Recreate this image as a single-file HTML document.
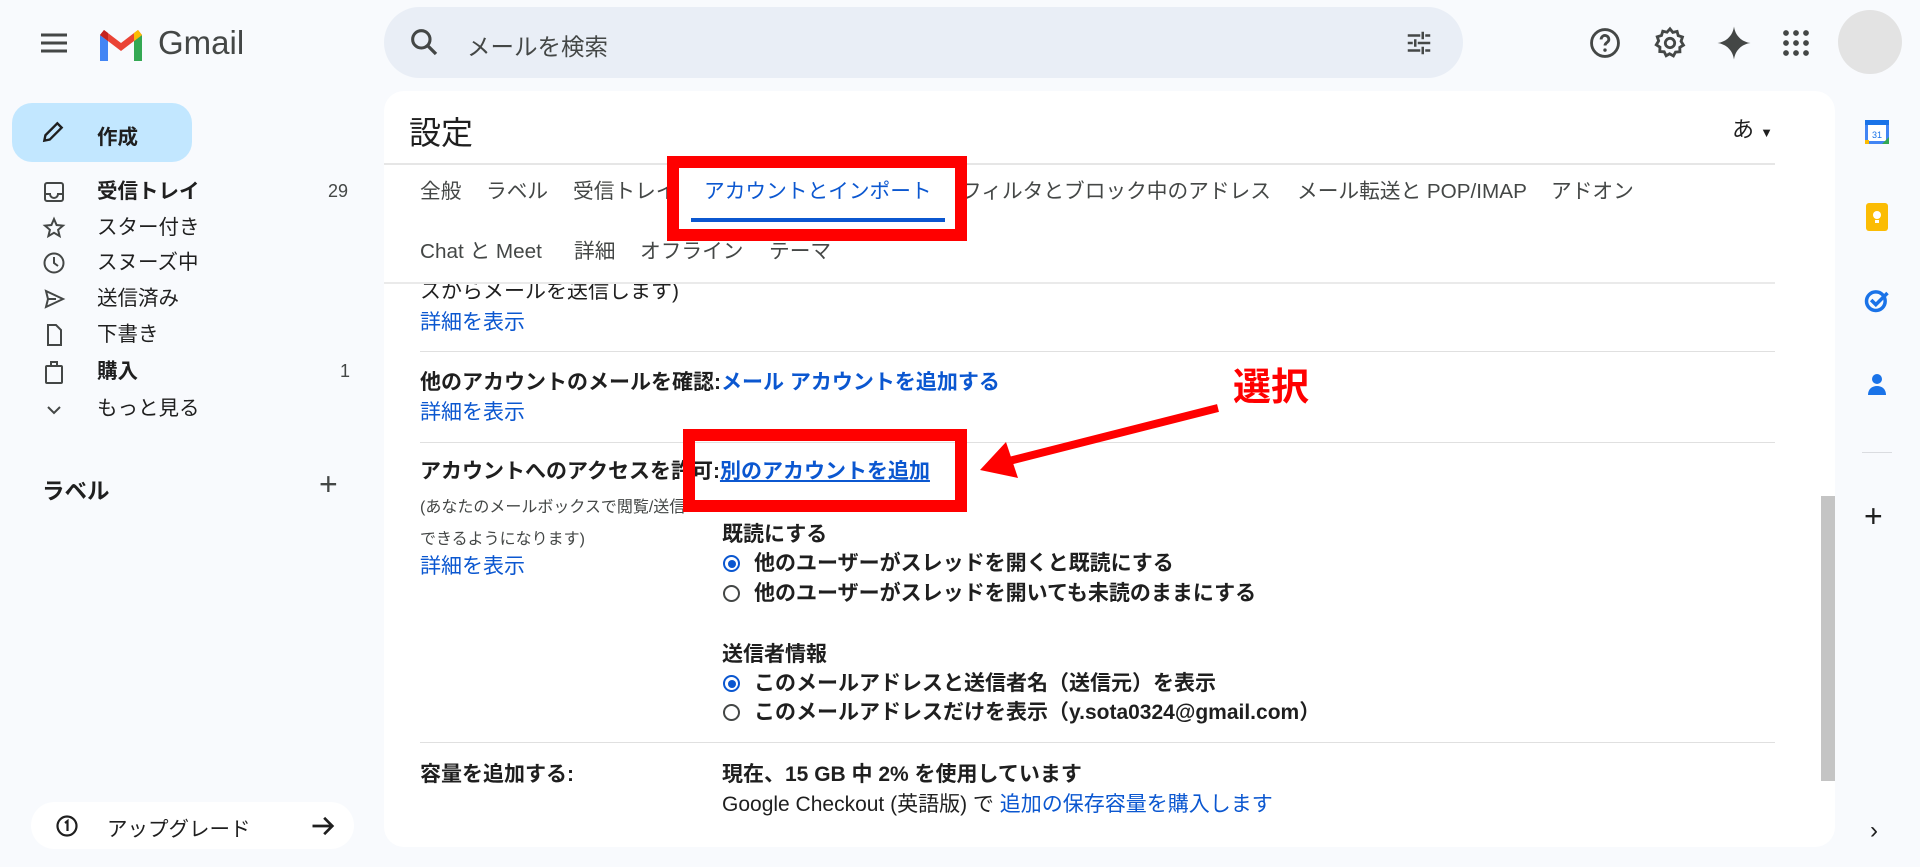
<!DOCTYPE html>
<html><head><meta charset="utf-8">
<style>
*{margin:0;padding:0;box-sizing:border-box}
body{width:1920px;height:867px;overflow:hidden;background:#f8fafd;font-family:"Liberation Sans","Noto Sans CJK JP",sans-serif;color:#1f1f1f;position:relative}
.a{position:absolute;white-space:nowrap}
.nav{font-size:20.5px;left:97px;line-height:24px}
.ic{position:absolute;left:42px}
.tab{font-size:20.7px;color:#444746;top:180px;line-height:24px}
.tab2{top:240px}
.t{font-size:21px;line-height:24px}
.b{font-weight:bold}
.lk{color:#0b57d0}
.hr{position:absolute;height:1px;background:#e0e0e0}
.rad{position:absolute;left:723px;width:17px;height:17px;border:2px solid #444746;border-radius:50%}
.rad.on{border-color:#0b57d0}
.rad.on::after{content:"";position:absolute;left:2.5px;top:2.5px;width:8px;height:8px;border-radius:50%;background:#0b57d0}
</style></head><body>

<svg class="a" style="left:38px;top:30px" width="32" height="26" viewBox="0 0 32 26"><path d="M3 5h26M3 13h26M3 21h26" stroke="#444746" stroke-width="3"/></svg>
<svg class="a" style="left:97px;top:27px" width="48" height="36" viewBox="0 0 48 36">
<path d="M3 34h8V14L3 8z" fill="#4285f4"/><path d="M37 34h8V8l-8 6z" fill="#34a853"/>
<path d="M3 8l21 16 21-16-4-5-17 13L7 3z" fill="#ea4335"/>
<path d="M37 14l8-6-4-5-4 3z" fill="#fbbc04"/><path d="M3 8l8 6V6L7 3z" fill="#c5221f"/></svg>
<div class="a" style="left:158px;top:24px;font-size:33px;color:#444746;line-height:38px">Gmail</div>

<div class="a" style="left:384px;top:7px;width:1079px;height:71px;border-radius:36px;background:#e9eef6"></div>
<svg class="a" style="left:408px;top:26px" width="32" height="32" viewBox="0 0 24 24"><circle cx="10" cy="10" r="6.5" fill="none" stroke="#444746" stroke-width="2.3"/><path d="M15 15l6 6" stroke="#444746" stroke-width="2.5"/></svg>
<div class="a" style="left:467px;top:28px;font-size:23.5px;color:#444746">メールを検索</div>
<svg class="a" style="left:1404px;top:28px" width="30" height="30" viewBox="0 0 24 24"><path d="M3 6h10M17 6h4M15 3v6M3 12h4M11 12h10M9 9v6M3 18h10M17 18h4M15 15v6" stroke="#444746" stroke-width="2"/></svg>

<svg class="a" style="left:1588px;top:26px" width="34" height="34" viewBox="0 0 24 24"><circle cx="12" cy="12" r="9.5" fill="none" stroke="#444746" stroke-width="2"/><path d="M9.3 9.5a2.7 2.7 0 115 1.3c-.8 1-2.3 1.4-2.3 3" fill="none" stroke="#444746" stroke-width="2"/><circle cx="12" cy="17" r="1.2" fill="#444746"/></svg>
<svg class="a" style="left:1653px;top:26px" width="34" height="34" viewBox="0 0 24 24"><path d="M12 2l2 2.5 3-.7.8 3 3 1-1 3 1.7 2.7-2.6 1.6.1 3.1-3.1.2-1.5 2.7-2.7-1.5L9.3 21l-1.4-2.8-3.1-.2.1-3.1L2.3 13.3 4 10.5 3 7.6l3-.9.9-3 3 .7z" fill="none" stroke="#444746" stroke-width="2"/><circle cx="12" cy="12" r="3.3" fill="none" stroke="#444746" stroke-width="2"/></svg>
<svg class="a" style="left:1716px;top:25px" width="36" height="36" viewBox="0 0 24 24"><path d="M12 1C12.8 7 17 11.2 23 12 17 12.8 12.8 17 12 23 11.2 17 7 12.8 1 12 7 11.2 11.2 7 12 1z" fill="#444746"/></svg>
<svg class="a" style="left:1781px;top:28px" width="30" height="30" viewBox="0 0 24 24" fill="#444746"><circle cx="4" cy="4" r="2.3"/><circle cx="12" cy="4" r="2.3"/><circle cx="20" cy="4" r="2.3"/><circle cx="4" cy="12" r="2.3"/><circle cx="12" cy="12" r="2.3"/><circle cx="20" cy="12" r="2.3"/><circle cx="4" cy="20" r="2.3"/><circle cx="12" cy="20" r="2.3"/><circle cx="20" cy="20" r="2.3"/></svg>
<div class="a" style="left:1838px;top:10px;width:64px;height:64px;border-radius:50%;background:#e3e3e3"></div>

<div class="a" style="left:12px;top:103px;width:180px;height:59px;border-radius:20px;background:#c2e7ff"></div>
<svg class="a" style="left:40px;top:119px" width="26" height="26" viewBox="0 0 24 24"><path d="M4 20l1-5L16 4l4 4L9 19z" fill="none" stroke="#1f1f1f" stroke-width="2.2"/></svg>
<div class="a" style="left:97px;top:120px;font-size:20.5px;font-weight:bold;color:#1f1f1f">作成</div>

<svg class="ic" style="top:180px" width="24" height="24" viewBox="0 0 24 24"><rect x="3" y="3" width="18" height="18" rx="2" fill="none" stroke="#444746" stroke-width="2"/><path d="M3 14h5a4 4 0 008 0h5" fill="none" stroke="#444746" stroke-width="2"/></svg>
<div class="a nav b" style="top:180px">受信トレイ</div><div class="a" style="left:328px;top:181px;font-size:18px;color:#444746">29</div>
<svg class="ic" style="top:216px" width="24" height="24" viewBox="0 0 24 24"><path d="M12 3l2.6 6 6.4.6-4.9 4.2 1.5 6.3L12 16.8 6.4 20.1l1.5-6.3L3 9.6 9.4 9z" fill="none" stroke="#444746" stroke-width="2"/></svg>
<div class="a nav" style="top:216px">スター付き</div>
<svg class="ic" style="top:251px" width="24" height="24" viewBox="0 0 24 24"><circle cx="12" cy="12" r="9.5" fill="none" stroke="#444746" stroke-width="2"/><path d="M12 6v6l4 3" fill="none" stroke="#444746" stroke-width="2"/></svg>
<div class="a nav" style="top:251px">スヌーズ中</div>
<svg class="ic" style="top:287px" width="24" height="24" viewBox="0 0 24 24"><path d="M4 4l17 8-17 8 2-8z M6 12h8" fill="none" stroke="#444746" stroke-width="2"/></svg>
<div class="a nav" style="top:287px">送信済み</div>
<svg class="ic" style="top:323px" width="24" height="24" viewBox="0 0 24 24"><path d="M6 2h8l5 5v15H6z" fill="none" stroke="#444746" stroke-width="2"/></svg>
<div class="a nav" style="top:323px">下書き</div>
<svg class="ic" style="top:359px" width="24" height="26" viewBox="0 0 24 26"><rect x="4" y="7" width="16" height="17" rx="1" fill="none" stroke="#444746" stroke-width="2"/><path d="M9 7V3h6v4" fill="none" stroke="#444746" stroke-width="2"/></svg>
<div class="a nav b" style="top:360px">購入</div><div class="a" style="left:340px;top:361px;font-size:18px;color:#444746">1</div>
<svg class="ic" style="top:398px" width="24" height="24" viewBox="0 0 24 24"><path d="M6 9l6 6 6-6" fill="none" stroke="#444746" stroke-width="2"/></svg>
<div class="a nav" style="top:397px">もっと見る</div>

<div class="a" style="left:42px;top:474px;font-size:22.5px;font-weight:bold;color:#1f1f1f">ラベル</div>
<div class="a" style="left:319px;top:466px;font-size:32px;color:#444746;font-weight:300">+</div>

<div class="a" style="left:31px;top:802px;width:323px;height:47px;border-radius:24px;background:#fff"></div>
<svg class="a" style="left:55px;top:814px" width="24" height="24" viewBox="0 0 24 24"><circle cx="12" cy="12" r="9.5" fill="none" stroke="#1f1f1f" stroke-width="2.2"/><path d="M10 9l2.5-2v10" fill="none" stroke="#1f1f1f" stroke-width="2.2"/></svg>
<div class="a" style="left:107px;top:812px;font-size:20.5px;color:#1f1f1f">アップグレード</div>
<svg class="a" style="left:309px;top:812px" width="28" height="28" viewBox="0 0 24 24"><path d="M3 12h17M13 5l7 7-7 7" fill="none" stroke="#1f1f1f" stroke-width="2.3"/></svg>

<div class="a" style="left:384px;top:91px;width:1451px;height:756px;border-radius:20px;background:#fff"></div>
<div class="a" style="left:409px;top:108px;font-size:32px;color:#1f1f1f">設定</div>
<div class="a" style="left:1732px;top:112px;font-size:22px;color:#1f1f1f">あ <span style="font-size:13px">▼</span></div>
<div class="hr" style="left:384px;top:163px;width:1391px;background:#e6e6e6;height:2px"></div>

<div class="a tab" style="left:420px">全般</div>
<div class="a tab" style="left:486px">ラベル</div>
<div class="a tab" style="left:573px">受信トレイ</div>
<div class="a tab" style="left:704px;color:#0b57d0">アカウントとインポート</div>
<div class="a" style="left:691px;top:218px;width:254px;height:4px;background:#0b57d0"></div>
<div class="a tab" style="left:961px">フィルタとブロック中のアドレス</div>
<div class="a tab" style="left:1297px">メール転送と POP/IMAP</div>
<div class="a tab" style="left:1551px">アドオン</div>
<div class="a tab tab2" style="left:420px">Chat と Meet</div>
<div class="a tab tab2" style="left:574px">詳細</div>
<div class="a tab tab2" style="left:640px">オフライン</div>
<div class="a tab tab2" style="left:769px">テーマ</div>
<div class="hr" style="left:384px;top:282px;width:1391px;height:2px;background:#eaeaea"></div>

<div class="a" style="left:384px;top:284px;width:1391px;height:540px;overflow:hidden">
<div class="a t" style="left:36px;top:-4px">スからメールを送信します)</div>
<div class="a t lk" style="left:36px;top:27px">詳細を表示</div>
<div class="hr" style="left:36px;top:67px;width:1355px"></div>
<div class="a t b" style="left:36px;top:87px">他のアカウントのメールを確認:<span class="lk">メール アカウントを追加する</span></div>
<div class="a t lk" style="left:36px;top:117px">詳細を表示</div>
<div class="hr" style="left:36px;top:158px;width:1355px"></div>
<div class="a t b" style="left:36px;top:176px">アカウントへのアクセスを許可:<span class="lk" style="text-decoration:underline">別のアカウントを追加</span></div>
<div class="a" style="left:36px;top:209px;font-size:16px;color:#444746">(あなたのメールボックスで閲覧/送信</div>
<div class="a" style="left:36px;top:241px;font-size:16px;color:#444746">できるようになります)</div>
<div class="a t lk" style="left:36px;top:271px">詳細を表示</div>
<div class="a t b" style="left:338px;top:239px">既読にする</div>
<div class="rad on" style="left:339px;top:271px"></div><div class="a t b" style="left:370px;top:268px">他のユーザーがスレッドを開くと既読にする</div>
<div class="rad" style="left:339px;top:301px"></div><div class="a t b" style="left:370px;top:298px">他のユーザーがスレッドを開いても未読のままにする</div>
<div class="a t b" style="left:338px;top:359px">送信者情報</div>
<div class="rad on" style="left:339px;top:391px"></div><div class="a t b" style="left:370px;top:388px">このメールアドレスと送信者名（送信元）を表示</div>
<div class="rad" style="left:339px;top:420px"></div><div class="a t b" style="left:370px;top:417px">このメールアドレスだけを表示（y.sota0324@gmail.com）</div>
<div class="hr" style="left:36px;top:458px;width:1355px"></div>
<div class="a t b" style="left:36px;top:479px">容量を追加する:</div>
<div class="a t b" style="left:338px;top:479px">現在、15 GB 中 2% を使用しています</div>
<div class="a t" style="left:338px;top:509px">Google Checkout (英語版) で <span class="lk">追加の保存容量を購入します</span></div>
</div>
<div class="a" style="left:1821px;top:496px;width:14px;height:285px;background:#c4c4c4"></div>

<div class="a" style="left:667px;top:156px;width:300px;height:85px;border:12px solid #ff0000"></div>
<div class="a" style="left:683px;top:429px;width:284px;height:83px;border:12px solid #ff0000"></div>
<svg class="a" style="left:960px;top:395px" width="270" height="95" viewBox="0 0 270 95"><path d="M258 13L45 67" stroke="#ff0000" stroke-width="8"/><path d="M20 75L46 47 58 83z" fill="#ff0000"/></svg>
<div class="a" style="left:1233px;top:356px;font-size:38px;font-weight:bold;color:#ff0000">選択</div>

<svg class="a" style="left:1864px;top:118px" width="26" height="28" viewBox="0 0 26 28"><rect x="1" y="2" width="24" height="24" rx="3" fill="#4285f4"/><rect x="4" y="7" width="18" height="16" fill="#fff"/><path d="M1 2h24v5H1z" fill="#1a73e8"/><path d="M18 26h7v-7z" fill="#34a853"/><path d="M1 22h4v4H1z" fill="#fbbc04"/><text x="13" y="20" font-size="9" text-anchor="middle" fill="#1a73e8" font-family="Liberation Sans">31</text></svg>
<svg class="a" style="left:1866px;top:203px" width="22" height="28" viewBox="0 0 22 28"><rect x="0" y="0" width="22" height="28" rx="3" fill="#fbbc04"/><circle cx="11" cy="12" r="4" fill="#fff"/><rect x="9" y="17" width="4" height="3" fill="#fff"/></svg>
<svg class="a" style="left:1863px;top:286px" width="28" height="28" viewBox="0 0 24 24"><circle cx="11" cy="13" r="8" fill="none" stroke="#1a73e8" stroke-width="3"/><path d="M7 12l4 4 10-10" fill="none" stroke="#1a73e8" stroke-width="3"/></svg>
<svg class="a" style="left:1865px;top:370px" width="24" height="28" viewBox="0 0 24 28"><circle cx="12" cy="9" r="5" fill="#1a73e8"/><path d="M3 25c0-6 4-9 9-9s9 3 9 9z" fill="#1a73e8"/></svg>
<div class="a" style="left:1862px;top:452px;width:30px;height:1px;background:#dadce0"></div>
<div class="a" style="left:1864px;top:498px;font-size:32px;color:#1f1f1f">+</div>
<div class="a" style="left:1870px;top:817px;font-size:24px;color:#1f1f1f">›</div>
</body></html>
